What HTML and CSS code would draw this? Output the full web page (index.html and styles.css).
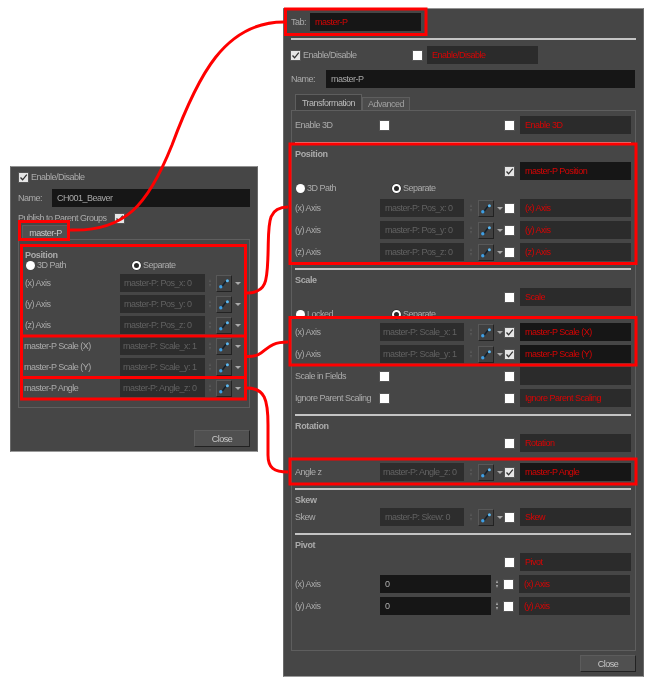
FILE: index.html
```html
<!DOCTYPE html>
<html lang="en">
<head>
<meta charset="utf-8">
<title>Publish attributes</title>
<link rel="stylesheet" href="styles.css">
</head>
<body>
<svg class="defs" width="0" height="0" aria-hidden="true">
  <symbol id="curve" viewBox="0 0 14 15">
    <path d="M3.5 11 C7 11 6.5 5 10.5 5" fill="none" stroke="#12202c" stroke-width="1.5"/>
    <circle cx="3.8" cy="10.8" r="1.7" fill="#3f9fe4"/>
    <circle cx="10.4" cy="4.8" r="1.5" fill="#5ab8f2"/>
  </symbol>
  <symbol id="check" viewBox="0 0 9 9">
    <path d="M1.5 4.5 L3.6 6.8 L7.8 1.6" fill="none" stroke="#333" stroke-width="1.3"/>
  </symbol>
</svg>

<section class="win win-left">
  <div class="l-enable"><span class="cb on"><svg><use href="#check"/></svg></span><span class="txt">Enable/Disable</span></div>
  <div class="l-name"><span class="txt l-name-label">Name:</span><span class="field active wide-l">CH001_Beaver</span></div>
  <div class="l-publish"><span class="txt l-pub-label">Publish to Parent Groups</span><span class="cb on"><svg><use href="#check"/></svg></span></div>
  <div class="l-tab">master-P</div>
  <div class="frame l-frame">
    <div class="title l-title">Position</div>
    <div class="radios l-radios">
      <span class="radio-item l-radio-a"><i class="radio"></i><span class="txt">3D Path</span></span>
      <span class="radio-item"><i class="radio sel"></i><span class="txt">Separate</span></span>
    </div>
    <div class="l-row first"><span class="txt lbl-l">(x) Axis</span><span class="field dim">master-P: Pos_x: 0</span><i class="spin"></i><span class="btn"><svg><use href="#curve"/></svg></span><i class="arrow"></i></div>
    <div class="l-row"><span class="txt lbl-l">(y) Axis</span><span class="field dim">master-P: Pos_y: 0</span><i class="spin"></i><span class="btn"><svg><use href="#curve"/></svg></span><i class="arrow"></i></div>
    <div class="l-row"><span class="txt lbl-l">(z) Axis</span><span class="field dim">master-P: Pos_z: 0</span><i class="spin"></i><span class="btn"><svg><use href="#curve"/></svg></span><i class="arrow"></i></div>
    <div class="l-row"><span class="txt lbl-l tight">master-P Scale (X)</span><span class="field dim tight-f">master-P: Scale_x: 1</span><i class="spin"></i><span class="btn"><svg><use href="#curve"/></svg></span><i class="arrow"></i></div>
    <div class="l-row"><span class="txt lbl-l tight">master-P Scale (Y)</span><span class="field dim tight-f">master-P: Scale_y: 1</span><i class="spin"></i><span class="btn"><svg><use href="#curve"/></svg></span><i class="arrow"></i></div>
    <div class="l-row"><span class="txt lbl-l tight">master-P Angle</span><span class="field dim tight-f">master-P: Angle_z: 0</span><i class="spin"></i><span class="btn"><svg><use href="#curve"/></svg></span><i class="arrow"></i></div>
  </div>
  <div class="foot l-foot"><span class="close">Close</span></div>
</section>

<section class="win win-right">
  <div class="r-tab"><span class="txt r-tab-label">Tab:</span><span class="field active r-tab-field red">master-P</span></div>
  <div class="hr r-tophr"></div>
  <div class="r-enable"><span class="cb on"><svg><use href="#check"/></svg></span><span class="txt r-en-label">Enable/Disable</span><span class="cb"></span><span class="field soft red r-en-field">Enable/Disable</span></div>
  <div class="r-name"><span class="txt r-name-label">Name:</span><span class="field active r-name-field">master-P</span></div>
  <div class="tabs"><span class="tab cur">Transformation</span><span class="tab">Advanced</span></div>
  <div class="frame r-frame">
    <div class="row"><span class="txt lbl">Enable 3D</span><span class="cb"></span><span class="push"></span><span class="cb"></span><span class="field soft red pub">Enable 3D</span></div>
    <div class="hr first-hr"></div>
    <div class="title">Position</div>
    <div class="row"><span class="push"></span><span class="cb on"><svg><use href="#check"/></svg></span><span class="field active red pub">master-P Position</span></div>
    <div class="radios"><span class="radio-item r-radio-a"><i class="radio"></i><span class="txt">3D Path</span></span><span class="radio-item"><i class="radio sel"></i><span class="txt">Separate</span></span></div>
    <div class="row"><span class="txt lbl">(x) Axis</span><span class="field dim val">master-P: Pos_x: 0</span><i class="spin"></i><span class="btn"><svg><use href="#curve"/></svg></span><i class="arrow"></i><span class="cb"></span><span class="field soft red pub">(x) Axis</span></div>
    <div class="row"><span class="txt lbl">(y) Axis</span><span class="field dim val">master-P: Pos_y: 0</span><i class="spin"></i><span class="btn"><svg><use href="#curve"/></svg></span><i class="arrow"></i><span class="cb"></span><span class="field soft red pub">(y) Axis</span></div>
    <div class="row"><span class="txt lbl">(z) Axis</span><span class="field dim val">master-P: Pos_z: 0</span><i class="spin"></i><span class="btn"><svg><use href="#curve"/></svg></span><i class="arrow"></i><span class="cb"></span><span class="field soft red pub">(z) Axis</span></div>
    <div class="hr"></div>
    <div class="title">Scale</div>
    <div class="row"><span class="push"></span><span class="cb"></span><span class="field soft red pub">Scale</span></div>
    <div class="radios compact"><span class="radio-item r-radio-a"><i class="radio"></i><span class="txt">Locked</span></span><span class="radio-item"><i class="radio sel"></i><span class="txt">Separate</span></span></div>
    <div class="row"><span class="txt lbl">(x) Axis</span><span class="field dim val tight-f">master-P: Scale_x: 1</span><i class="spin"></i><span class="btn"><svg><use href="#curve"/></svg></span><i class="arrow"></i><span class="cb on"><svg><use href="#check"/></svg></span><span class="field active red pub">master-P Scale (X)</span></div>
    <div class="row"><span class="txt lbl">(y) Axis</span><span class="field dim val tight-f">master-P: Scale_y: 1</span><i class="spin"></i><span class="btn"><svg><use href="#curve"/></svg></span><i class="arrow"></i><span class="cb on"><svg><use href="#check"/></svg></span><span class="field active red pub">master-P Scale (Y)</span></div>
    <div class="row"><span class="txt lbl">Scale in Fields</span><span class="cb"></span><span class="push"></span><span class="cb"></span><span class="field soft red pub"></span></div>
    <div class="row"><span class="txt lbl">Ignore Parent Scaling</span><span class="cb"></span><span class="push"></span><span class="cb"></span><span class="field soft red pub">Ignore Parent Scaling</span></div>
    <div class="hr"></div>
    <div class="title">Rotation</div>
    <div class="row"><span class="push"></span><span class="cb"></span><span class="field soft red pub">Rotation</span></div>
    <div class="row spaced"><span class="txt lbl">Angle z</span><span class="field dim val tight-f">master-P: Angle_z: 0</span><i class="spin"></i><span class="btn"><svg><use href="#curve"/></svg></span><i class="arrow"></i><span class="cb on"><svg><use href="#check"/></svg></span><span class="field active red pub">master-P Angle</span></div>
    <div class="hr"></div>
    <div class="title">Skew</div>
    <div class="row"><span class="txt lbl">Skew</span><span class="field dim val">master-P: Skew: 0</span><i class="spin"></i><span class="btn"><svg><use href="#curve"/></svg></span><i class="arrow"></i><span class="cb"></span><span class="field soft red pub">Skew</span></div>
    <div class="hr"></div>
    <div class="title">Pivot</div>
    <div class="row"><span class="push"></span><span class="cb"></span><span class="field soft red pub">Pivot</span></div>
    <div class="row"><span class="txt lbl">(x) Axis</span><span class="field active num">0</span><i class="spin lit"></i><span class="cb"></span><span class="field soft red pub">(x) Axis</span></div>
    <div class="row"><span class="txt lbl">(y) Axis</span><span class="field active num">0</span><i class="spin lit"></i><span class="cb"></span><span class="field soft red pub">(y) Axis</span></div>
  </div>
  <div class="foot r-foot"><span class="close">Close</span></div>
</section>

<svg class="marks" width="651" height="684" viewBox="0 0 651 684" aria-hidden="true">
  <g fill="none" stroke="#f00" stroke-width="3">
    <rect x="285.5" y="9" width="140.5" height="25.5"/>
    <rect x="290" y="144" width="346" height="119.5"/>
    <rect x="290" y="317.5" width="346" height="47.5"/>
    <rect x="290" y="459" width="346" height="25"/>
    <rect x="19.5" y="221.5" width="49" height="18"/>
    <rect x="21.5" y="245.5" width="224" height="153.5"/>
    <path d="M21.5 336 H245.5 M21.5 377.5 H245.5"/>
    <path d="M70 230 C125 232 148 205 172 145 C198 75 225 22 284 22"/>
    <path d="M247 293 C268 293 267 278 268 255 C269 225 266 207 288 207"/>
    <path d="M247 356.5 C268 357 262 342 288 342"/>
    <path d="M247 388 C265 388 268 400 268 425 L268 455 C268 468 274 472 288 472"/>
  </g>
</svg>
</body>
</html>
```
FILE: styles.css
```css
html, body { margin: 0; padding: 0; }
body {
  position: relative;
  width: 651px;
  height: 684px;
  background: #fff;
  overflow: hidden;
  font-family: "Liberation Sans", Arial, sans-serif;
  font-size: 9px;
  letter-spacing: -0.5px;
  line-height: 12px;
  color: #ababab;
}
.defs { position: absolute; }
.marks { position: absolute; left: 0; top: 0; }

.win {
  position: absolute;
  box-sizing: border-box;
  background: #464646;
  border: 1px solid #8a8a8a;
  border-color: #929292 #6a6a6a #9a9a9a #6a6a6a;
  display: flex;
  flex-direction: column;
  filter: blur(0.35px);
}
.win-left { left: 10px; top: 166px; width: 248px; height: 286px; padding: 4px 7px 0; }
.win-right { left: 283px; top: 8px; width: 361px; height: 669px; padding: 4px 7px 0; }

.txt { white-space: nowrap; }
.field {
  box-sizing: border-box;
  display: flex;
  align-items: center;
  height: 18px;
  padding-left: 5px;
  white-space: nowrap;
  overflow: hidden;
  flex: none;
}
.active { background: #161616; color: #a8a8a8; }
.soft { background: #2b2b2b; }
.dim { background: #2d2d2d; color: #626262; }
.red { color: #d80404; }
.tight-f { padding-left: 3px; }

.cb {
  display: block;
  flex: none;
  width: 9px;
  height: 9px;
  background: #fff;
  box-shadow: 0 0 0 1px #555;
}
.cb svg { display: block; width: 9px; height: 9px; }
.cb.on { background: #e6e6e6; }

.radio {
  display: block;
  box-sizing: border-box;
  width: 9px;
  height: 9px;
  border-radius: 50%;
  background: #fff;
  flex: none;
}
.radio.sel { background: #262626; border: 2px solid #fff; box-shadow: 0 0 0 .5px #222; }
.radio-item { display: flex; align-items: center; gap: 2px; }
.radios { display: flex; height: 10px; margin: 3px 0 6px; padding-left: 1px; align-items: center; }
.radios.compact { margin-bottom: 0; }
.r-radio-a { width: 96px; }

.spin { position: relative; display: block; width: 5px; height: 8px; flex: none; }
.spin::before, .spin::after {
  content: "";
  position: absolute;
  left: 1px;
  border-left: 1.5px solid transparent;
  border-right: 1.5px solid transparent;
}
.spin::before { top: 0; border-bottom: 3px solid #5a5a5a; }
.spin::after { bottom: 0; border-top: 3px solid #5a5a5a; }
.spin.lit::before { border-bottom-color: #b0b0b0; }
.spin.lit::after { border-top-color: #b0b0b0; }

.btn {
  box-sizing: border-box;
  display: block;
  flex: none;
  width: 16px;
  height: 17px;
  background: #404040;
  border: 1px solid #585858;
  border-right-color: #222;
  border-bottom-color: #222;
}
.btn svg { display: block; width: 14px; height: 15px; }
.arrow {
  display: block;
  flex: none;
  width: 0;
  height: 0;
  border-left: 3px solid transparent;
  border-right: 3px solid transparent;
  border-top: 3px solid #aaa;
}

.hr { height: 2px; margin-top: 7px; background: #c4c4c4; flex: none; }
.first-hr { margin-top: 8px; }
.title { height: 10px; margin-top: 4px; font-weight: bold; color: #ababab; letter-spacing: -0.35px; }

.frame { box-sizing: border-box; border: 1px solid #5e5e5e; flex: none; }

.close {
  box-sizing: border-box;
  display: flex;
  align-items: center;
  justify-content: center;
  width: 56px;
  height: 17px;
  background: #505050;
  color: #c8c8c8;
  border: 1px solid #5c5c5c;
  border-right-color: #222;
  border-bottom-color: #222;
}
.foot { display: flex; justify-content: flex-end; }

/* Left window */
.l-enable { display: flex; align-items: center; gap: 3px; height: 12px; padding-left: 1px; }
.l-name { display: flex; align-items: center; margin-top: 6px; }
.l-name-label { width: 35px; }
.wide-l { width: 198px; }
.l-publish { display: flex; align-items: center; height: 12px; margin-top: 5px; }
.l-pub-label { width: 97px; }
.l-tab {
  box-sizing: border-box;
  display: flex;
  align-items: center;
  justify-content: center;
  width: 47px;
  height: 15px;
  margin: 1px 0 -1px 4px;
  background: #505050;
  color: #c8c8c8;
  border: 1px solid #5c5c5c;
  border-bottom-color: #333;
  position: relative;
}
.l-frame { width: 232px; height: 169px; padding: 9px 0 0 6px; margin-top: 0; }
.l-title { margin-top: 0; }
.l-radios { margin: 1px 0 0; }
.l-radio-a { width: 106px; }
.l-row { display: flex; align-items: center; margin-top: 3px; height: 18px; }
.l-row.first { margin-top: 4px; }
.lbl-l { width: 95px; }
.lbl-l.tight { margin-left: -1px; width: 96px; }
.l-row .field { width: 85px; padding-left: 4px; }
.l-row .tight-f { padding-left: 3px; }
.l-row .spin { margin: 0 3px 0 3px; }
.l-row .btn { margin-right: 3px; }
.l-foot { margin-top: 22px; }

/* Right window */
.r-tab { display: flex; align-items: center; }
.r-tab-label { width: 19px; }
.r-tab-field { width: 111px; height: 18px; }
.r-tophr { margin-top: 7px; }
.r-enable { display: flex; align-items: center; height: 18px; margin-top: 6px; }
.r-en-label { margin-left: 3px; width: 110px; }
.r-en-field { width: 111px; margin-left: 5px; }
.r-name { display: flex; align-items: center; margin-top: 6px; }
.r-name-label { width: 35px; }
.r-name-field { width: 309px; }
.tabs { display: flex; align-items: flex-end; height: 16px; margin: 6px 0 0 4px; }
.tab {
  box-sizing: border-box;
  display: flex;
  align-items: center;
  justify-content: center;
  width: 48px;
  height: 13px;
  background: #4c4c4c;
  color: #a0a0a0;
  border: 1px solid #5e5e5e;
  border-bottom: 0;
}
.tab.cur { width: 67px; height: 16px; background: #3c3c3c; color: #bcbcbc; }
.r-frame { width: 345px; height: 541px; padding: 1px 4px 0 3px; margin-top: 0; }
.row { display: flex; align-items: center; height: 18px; margin-top: 4px; }
.row.spaced { margin-top: 11px; }
.lbl { width: 85px; flex: none; }
.push { flex: 1; }
.val { width: 84px; }
.num { width: 111px; color: #b0b0b0; }
.row .spin { margin: 0 4px 0 5px; }
.row .btn { margin-right: 3px; }
.row .arrow { margin-right: 2px; }
.row .num + .spin { margin: 0 4px 0 4px; }
.pub { width: 111px; margin-left: 6px; }
.r-foot { margin-top: 4px; }
```
